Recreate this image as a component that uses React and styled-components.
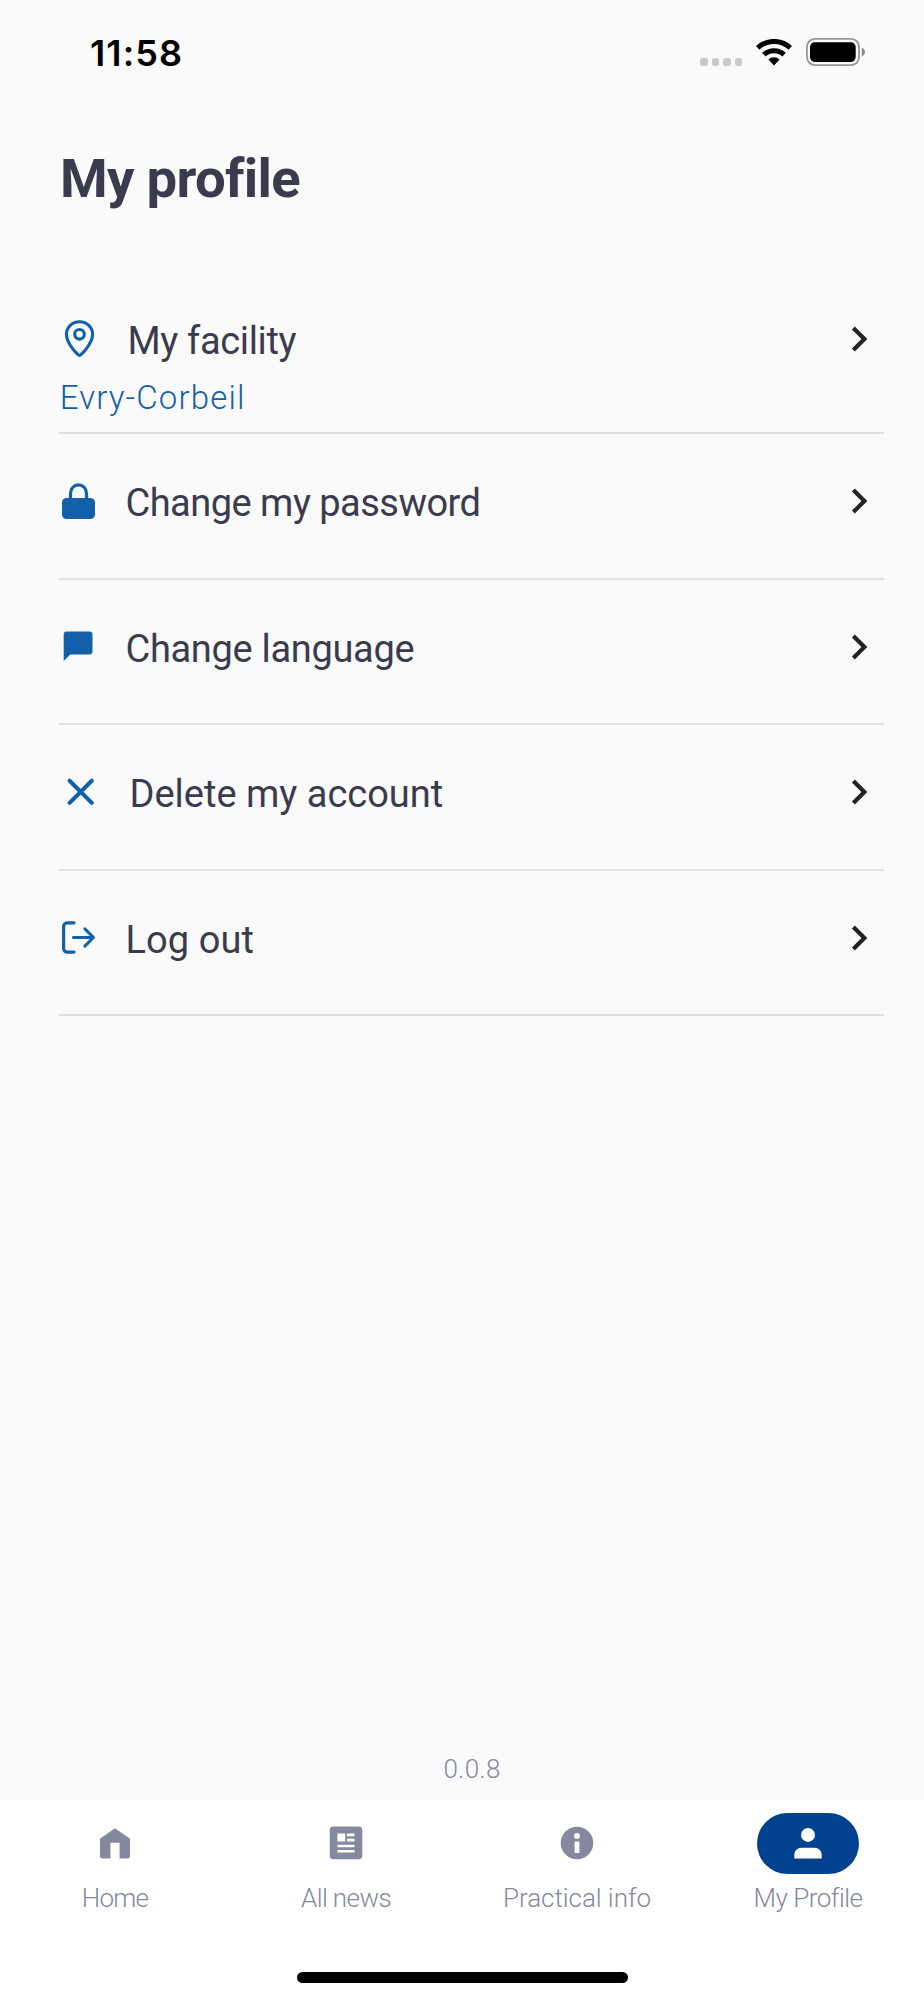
import React, { useState } from 'react'
import styled, { createGlobalStyle } from 'styled-components'
import { MdChevronRight } from 'react-icons/md'

const PinIcon = () => (
    <svg width="42" height="40" viewBox="0 0 42 40" fill="none" stroke="currentColor" strokeWidth="3.1">
        <path d="M20.5 35.4C19 35.4 7.4 23.6 7.4 14.3a13.1 12.6 0 0 1 26.2 0C33.6 23.6 22 35.4 20.5 35.4Z" strokeLinejoin="round" />
        <circle cx="20.5" cy="14.3" r="4.8" />
    </svg>
)

const LockIcon = () => (
    <svg width="40" height="40" viewBox="0 0 40 40" fill="none">
        <path d="M11.5 18v-6.8a8 8.4 0 0 1 16 0V18" stroke="currentColor" strokeWidth="3.2" />
        <rect x="3" y="16" width="33" height="21" rx="4.6" fill="currentColor" />
    </svg>
)

const ChatIcon = () => (
    <svg width="40" height="40" viewBox="0 0 40 40" fill="currentColor">
        <path d="M7.6 3.6h23a2.9 2.9 0 0 1 2.9 2.9v17a2.9 2.9 0 0 1-2.9 2.9H11.3L4.7 33V6.5A2.9 2.9 0 0 1 7.6 3.6Z" />
    </svg>
)

const CrossIcon = () => (
    <svg width="44" height="40" viewBox="0 0 44 40" fill="none" stroke="currentColor" strokeWidth="4.1" strokeLinecap="round">
        <path d="M10.6 7.7 32.8 29.9M32.8 7.7 10.6 29.9" />
    </svg>
)

const LogoutIcon = () => (
    <svg width="40" height="40" viewBox="0 0 40 40" fill="none" stroke="currentColor" strokeWidth="3.2" strokeLinecap="round" strokeLinejoin="round">
        <path d="M15 3.8H8.2a3.6 3.6 0 0 0-3.6 3.6v22.1a3.6 3.6 0 0 0 3.6 3.6H15M14.4 18.5h19.8M26 10l8.4 8.5-8.4 8.5" />
    </svg>
)

const HomeIcon = () => (
    <svg width="40" height="40" viewBox="0 0 40 40" fill="currentColor">
        <path d="M20 5.2 35 15.8v17a2.6 2.6 0 0 1-2.6 2.6h-7.8V19.8h-9.2v15.6H7.6A2.6 2.6 0 0 1 5 32.8v-17Z" />
    </svg>
)

const NewsIcon = () => (
    <svg width="40" height="40" viewBox="0 0 40 40" fill="currentColor" fillRule="evenodd">
        <path d="M7.5 3.6h25a3.8 3.8 0 0 1 3.8 3.8v25a3.8 3.8 0 0 1-3.8 3.8h-25a3.8 3.8 0 0 1-3.8-3.8v-25a3.8 3.8 0 0 1 3.8-3.8ZM11.4 10.6v7.8h7.8v-7.8ZM21 10.6v2.7h7.5v-2.7ZM21 15.8v2.6h7.5v-2.6ZM11.4 21.7v2.6h17.1v-2.6ZM11.4 27v2.6h17.1V27Z" />
    </svg>
)

const InfoIcon = () => (
    <svg width="40" height="40" viewBox="0 0 40 40">
        <circle cx="20" cy="20" r="16.3" fill="currentColor" />
        <circle cx="20" cy="12.9" r="2.9" fill="#fff" />
        <rect x="17.6" y="18.4" width="4.8" height="11.6" rx="0.5" fill="#fff" />
    </svg>
)

const PersonIcon = () => (
    <svg width="40" height="40" viewBox="0 0 40 40" fill="currentColor">
        <circle cx="20" cy="11.9" r="7" />
        <path d="M6.3 35.4v-3.6a7 7 0 0 1 7-7h13.4a7 7 0 0 1 7 7v3.6Z" />
    </svg>
)

const WifiIcon = () => (
    <svg width="36" height="27" viewBox="0 0 36 27" fill="none" stroke="#000">
        <path d="M1.7 8.8a24 24 0 0 1 32.6 0" strokeWidth="5" />
        <path d="M7.9 15.6a14.9 14.9 0 0 1 20.2 0" strokeWidth="5" />
        <path d="M12.4 20.4a8.4 8.4 0 0 1 11.2 0L18 26.6Z" fill="#000" stroke="none" />
    </svg>
)

const BatteryIcon = () => (
    <svg width="59" height="28" viewBox="0 0 59 28">
        <rect x="0.9" y="0.9" width="52.2" height="26.2" rx="8" fill="none" stroke="#999" strokeWidth="1.8" />
        <rect x="4" y="4.3" width="45.7" height="19.6" rx="4.8" fill="#000" />
        <path d="M55.8 9.8c4.2 1.6 4.2 7 0 8.6Z" fill="#8a8a8a" />
    </svg>
)

const options = [
    { label: 'My facility', detail: 'Evry-Corbeil', icon: <PinIcon />, spacing: -0.35 },
    { label: 'Change my password', icon: <LockIcon />, spacing: -0.52 },
    { label: 'Change language', icon: <ChatIcon />, spacing: -0.32 },
    { label: 'Delete my account', icon: <CrossIcon />, spacing: 0 },
    { label: 'Log out', icon: <LogoutIcon />, spacing: 0.1 },
]

const tabs = [
    { label: 'Home', icon: <HomeIcon />, spacing: -0.8 },
    { label: 'All news', icon: <NewsIcon />, spacing: -0.6 },
    { label: 'Practical info', icon: <InfoIcon />, spacing: -0.05 },
    { label: 'My Profile', icon: <PersonIcon />, spacing: -0.5 },
]

const App = () => {
    const [activeTab, setActiveTab] = useState('My Profile');

    return (
        <Screen>
            <GlobalStyle />
            <StatusBar>
                <Time>11:58</Time>
                <StatusIcons>
                    <Dots>
                        <span />
                        <span />
                        <span />
                        <span />
                    </Dots>
                    <WifiIcon />
                    <BatteryIcon />
                </StatusIcons>
            </StatusBar>
            <Content>
                <Title>My profile</Title>
                {options.map((option) => (
                    <Option key={option.label} $tall={Boolean(option.detail)}>
                        <OptionHeader>
                            {option.icon}
                            <OptionLabel $spacing={option.spacing}>{option.label}</OptionLabel>
                            <Chevron size={50} />
                        </OptionHeader>
                        {option.detail && <OptionDetail>{option.detail}</OptionDetail>}
                    </Option>
                ))}
                <Version>0.0.8</Version>
            </Content>
            <Footer>
                <TabBar>
                    {tabs.map((tab) => (
                        <Tab key={tab.label} onClick={() => setActiveTab(tab.label)}>
                            <TabIcon $active={activeTab === tab.label}>{tab.icon}</TabIcon>
                            <TabLabel $spacing={tab.spacing}>{tab.label}</TabLabel>
                        </Tab>
                    ))}
                </TabBar>
                <HomeIndicator />
            </Footer>
        </Screen>
    )
}

export default App



const GlobalStyle = createGlobalStyle`
    * {
        box-sizing: border-box;
    }
    body {
        margin: 0;
        background: #fafafa;
        font-family: Roboto, sans-serif;
        font-variant-ligatures: none;
    }
    svg {
        display: block;
        flex-shrink: 0;
    }
`;

const Screen = styled.div`
    display: flex;
    flex-direction: column;
    width: 100%;
    height: 2000px;
    background: #fafafa;
`;

const StatusBar = styled.div`
    display: flex;
    align-items: center;
    justify-content: space-between;
    height: 104px;
    padding: 0 59px 0 90px;
`;

const Time = styled.span`
    padding-top: 1px;
    font-family: Inter, sans-serif;
    font-size: 36px;
    font-weight: 600;
    letter-spacing: 1.1px;
    color: #000;
`;

const StatusIcons = styled.div`
    display: flex;
    align-items: center;
    gap: 14px;
`;

const Dots = styled.div`
    display: flex;
    gap: 4px;
    margin-top: 20px;
    span {
        width: 7.5px;
        height: 7.5px;
        border-radius: 2.5px;
        background: #c9c9c9;
    }
`;

const Content = styled.main`
    display: flex;
    flex-direction: column;
    flex-grow: 1;
    padding: 42px 40px 16px 59px;
`;

const Title = styled.h1`
    margin: 0 0 61.7px;
    padding-left: 1px;
    font-size: 54.5px;
    font-weight: 750;
    line-height: 64px;
    letter-spacing: -0.7px;
    color: #3a3c4d;
`;

const Option = styled.div`
    height: ${(props) => props.$tall ? '162.3px' : '145.6px'};
    padding-top: 46px;
    border-bottom: 2px solid #e0e1e7;
    color: #1260a9;
`;

const OptionHeader = styled.div`
    display: flex;
    align-items: center;
    height: 44px;
    cursor: pointer;
`;

const OptionLabel = styled.span`
    flex-grow: 1;
    padding: 2px 0 0 26.5px;
    font-size: 38px;
    font-weight: 450;
    line-height: 44px;
    letter-spacing: ${(props) => props.$spacing}px;
    color: #3a3c4d;
`;

const Chevron = styled(MdChevronRight)`
    margin-bottom: 2px;
    color: #222;
`;

const OptionDetail = styled.div`
    margin-top: 16.5px;
    padding-left: 0.7px;
    font-size: 33px;
    font-weight: 350;
    line-height: 40px;
    letter-spacing: 1.15px;
`;

const Version = styled.div`
    margin-top: auto;
    padding-left: 1px;
    font-size: 26px;
    font-weight: 350;
    line-height: 30px;
    letter-spacing: 0.3px;
    text-align: center;
    color: #85899f;
`;

const Footer = styled.footer`
    display: flex;
    flex-direction: column;
    align-items: center;
    justify-content: space-between;
    height: 200px;
    padding: 13px 0 17px;
    background: #fff;
`;

const TabBar = styled.nav`
    display: grid;
    grid-template-columns: repeat(4, 231px);
    width: 100%;
    padding-right: 1px;
    margin-left: -1px;
`;

const Tab = styled.button`
    display: flex;
    flex-direction: column;
    align-items: center;
    gap: 8.5px;
    padding: 0;
    border: none;
    background: none;
    font-family: inherit;
    cursor: pointer;
`;

const TabIcon = styled.div`
    display: flex;
    align-items: center;
    justify-content: center;
    width: 102px;
    height: 61px;
    padding-bottom: 1px;
    border-radius: 31px;
    background: ${(props) => props.$active ? '#00428f' : 'transparent'};
    color: ${(props) => props.$active ? '#fff' : '#85899f'};
`;

const TabLabel = styled.span`
    font-size: 26px;
    font-weight: 350;
    line-height: 30px;
    letter-spacing: ${(props) => props.$spacing}px;
    color: #85899f;
`;

const HomeIndicator = styled.div`
    width: 331px;
    height: 11px;
    border-radius: 6px;
    background: #000;
`;
